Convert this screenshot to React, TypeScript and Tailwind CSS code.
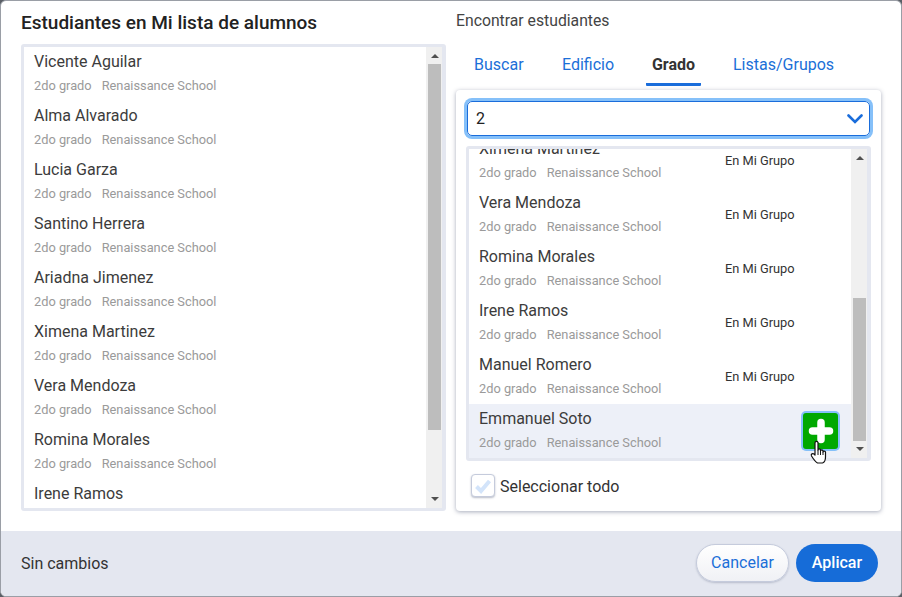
const leftStudents = ['Vicente Aguilar', 'Alma Alvarado', 'Lucia Garza', 'Santino Herrera', 'Ariadna Jimenez', 'Ximena Martinez', 'Vera Mendoza', 'Romina Morales', 'Irene Ramos']
const rightStudents = ['Ximena Martinez', 'Vera Mendoza', 'Romina Morales', 'Irene Ramos', 'Manuel Romero']

function StudentInfo({ name }: { name: string }) {
  return (
    <>
      <div className="text-[16px] leading-[20px] text-[#3c3c3c]">{name}</div>
      <div className="mt-[4px] flex text-[12.8px] leading-[20px] text-[#9a9a9a]">
        <span>2do grado</span>
        <span className="ml-[10px]">Renaissance School</span>
      </div>
    </>
  )
}

function Scrollbar({ thumbTop, thumbHeight }: { thumbTop: number; thumbHeight: number }) {
  return (
    <div className="relative w-[16px] shrink-0 bg-[#f0f0f0]">
      <div className="absolute left-[5px] top-[7px] h-0 w-0 border-x-[4px] border-b-[4px] border-x-transparent border-b-[#505050]" />
      <div className="absolute left-[2px] w-[13px] bg-[#bdbdbd]" style={{ top: thumbTop, height: thumbHeight }} />
      <div className="absolute bottom-[7px] left-[5px] h-0 w-0 border-x-[4px] border-t-[4px] border-x-transparent border-t-[#505050]" />
    </div>
  )
}

export default function App() {
  return (
    <div className="h-[597px] w-[902px] overflow-hidden bg-[#5a5f66] font-['Roboto',sans-serif]">
      <div className="flex h-[597px] w-[902px] flex-col overflow-hidden rounded-[6px] border border-[#9a9ea6] bg-white">
        <div className="flex min-h-0 flex-1">
          {/* Left column */}
          <div className="w-[455px] shrink-0 pl-[20px]">
            <h2 className="mt-[10px] text-[19px] font-medium leading-[24px] text-[#222]">Estudiantes en Mi lista de alumnos</h2>
            <div className="mt-[9px] flex h-[467px] w-[425px] overflow-hidden rounded-[3px] border-[3px] border-r-[4px] border-[#e4e7f0]">
              <div className="flex-1 overflow-hidden">
                {leftStudents.map((name) => (
                  <div key={name} className="h-[54px] pl-[10px] pt-[5px]">
                    <StudentInfo name={name} />
                  </div>
                ))}
              </div>
              <Scrollbar thumbTop={17} thumbHeight={366} />
            </div>
          </div>

          {/* Right column */}
          <div className="flex-1">
            <div className="mt-[10px] text-[15.75px] leading-[20px] text-[#444]">Encontrar estudiantes</div>
            <div className="mb-[4px] mt-[15px] flex h-[40px] pl-[18px] text-[16px] leading-[20px]">
              <div className="w-[88px] pt-[9px] text-[#1b6fd8]">Buscar</div>
              <div className="w-[84px] pt-[9px] text-[#1b6fd8]">Edificio</div>
              <div className="h-[40px] w-[55px] rounded-b-[1px] border-b-[3px] border-[#1a6ddb] pt-[9px] text-center font-bold text-[#333]">Grado</div>
              <div className="ml-[32px] pt-[9px] text-[#1b6fd8]">Listas/Grupos</div>
            </div>

            <div className="h-[421px] w-[425px] rounded-[4px] bg-white pt-[11px] shadow-[0_1px_4px_rgba(80,90,120,0.5)]">
              <div className="ml-[11px] flex h-[35px] w-[403px] items-center justify-between rounded-[5px] border border-[#1a6ddb] pl-[8px] pr-[6px] text-[16px] text-[#222] shadow-[0_0_0_3px_#85c0f9]">
                <span>2</span>
                <svg width="16" height="10" viewBox="0 0 16 10" fill="none">
                  <path d="M1.5 1.5 L8 8 L14.5 1.5" stroke="#1a6ddb" strokeWidth="2.6" strokeLinecap="round" />
                </svg>
              </div>

              <div className="relative ml-[10px] mt-[10px] h-[315px] w-[405px]">
                <div className="flex h-full overflow-hidden rounded-[3px] border-[3px] border-r-[4px] border-[#e4e7f0]">
                  <div className="flex-1 overflow-hidden">
                    <div className="-mt-[15px]">
                      {rightStudents.map((name) => (
                        <div key={name} className="flex h-[54px] pl-[10px] pt-[5px]">
                          <div className="w-[246px]">
                            <StudentInfo name={name} />
                          </div>
                          <div className="pt-[12px] text-[12.8px] leading-[20px] text-[#333]">En Mi Grupo</div>
                        </div>
                      ))}
                      <div className="flex h-[54px] justify-between bg-[#edf0f8] pl-[10px] pt-[5px]">
                        <div>
                          <StudentInfo name="Emmanuel Soto" />
                        </div>
                        <div className="mr-[13px] mt-[4px] flex h-[36px] w-[35px] items-center justify-center rounded-[3px] bg-[#00a800] shadow-[0_0_0_2px_#85c0f9]">
                          <svg width="26" height="26" viewBox="0 0 26 26" fill="none">
                            <path d="M13 4.5 V21.5 M4.5 13 H21.5" stroke="#fff" strokeWidth="7.5" strokeLinecap="round" />
                          </svg>
                        </div>
                      </div>
                    </div>
                  </div>
                  <Scrollbar thumbTop={149} thumbHeight={143} />
                </div>
                {/* mouse cursor lying over the add button */}
                <svg className="absolute left-[344px] top-[294px]" width="18" height="24" viewBox="0 0 18 24" fill="none">
                  <path d="M5 15 V3 C5 0.8 8 0.8 8 3 V10 C8 8.5 10.5 8.5 10.5 10 V11 C10.5 9.6 13 9.6 13 11 V12 C13 10.8 15.5 10.8 15.5 12 V17 C15.5 20 14 22.5 12.5 23 H7.5 C5.5 22 4 20 1.5 16 C0.5 14 2.8 13 4 14 Z" fill="#fff" stroke="#111" strokeWidth="1.2" strokeLinejoin="round" />
                  <path d="M8 10 V15 M10.5 11 V15 M13 12 V15" stroke="#111" strokeWidth="1" />
                </svg>
              </div>

              <div className="ml-[15px] mt-[13px] flex items-center">
                <div className="flex h-[23px] w-[24px] items-center justify-center rounded-[4px] border border-[#c5cbdc] bg-white shadow-[0_1px_2px_rgba(80,90,120,0.4)]">
                  <svg width="18" height="16" viewBox="0 0 18 16" fill="none">
                    <path d="M2.5 8.5 L7 13 L15.5 3" stroke="#d3e4fa" strokeWidth="4" />
                  </svg>
                </div>
                <span className="ml-[5px] pt-[2px] text-[16px] leading-[20px] text-[#333]">Seleccionar todo</span>
              </div>
            </div>
          </div>
        </div>

        {/* Footer */}
        <div className="flex h-[65px] shrink-0 items-center justify-between bg-[#e4e7f0] pl-[20px] pr-[23px]">
          <span className="text-[16px] text-[#333]">Sin cambios</span>
          <div className="mb-[2px] flex items-center gap-[7px]">
            <button className="h-[38px] w-[93px] rounded-full border border-[#c5cbdc] bg-gradient-to-b from-white to-[#f0f1f5] text-[16px] text-[#1b6fd8] shadow-[0_1px_2px_rgba(80,90,120,0.3)]">Cancelar</button>
            <button className="h-[38px] w-[82px] rounded-full bg-[#166cd8] text-[16px] font-medium text-white">Aplicar</button>
          </div>
        </div>
      </div>
    </div>
  )
}
